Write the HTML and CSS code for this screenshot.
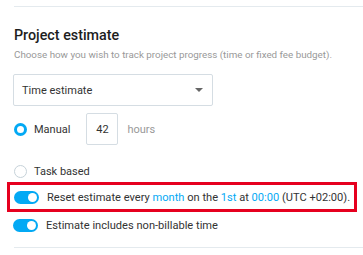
FILE: index.html
```html
<!DOCTYPE html>
<html lang="en">
<head>
    <meta charset="UTF-8">
    <meta name="viewport" content="width=device-width, initial-scale=1.0">
    <title>Project estimate</title>
    <link rel="stylesheet" href="styles.css">
</head>
<body>

    <div class="panel">
        <div class="divider divider-top"></div>

        <h2 class="title">Project estimate</h2>
        <p class="subtitle">Choose how you wish to track project progress (time or fixed fee budget).</p>

        <div class="select">
            <span>Time estimate</span>
            <span class="caret"></span>
        </div>

        <div class="radio-row manual-row">
            <span class="radio checked"></span>
            <span class="radio-label">Manual</span>
            <div class="num-input">42</div>
            <span class="unit">hours</span>
        </div>

        <div class="radio-row task-row">
            <span class="radio"></span>
            <span class="radio-label">Task based</span>
        </div>

        <div class="highlight">
            <div class="toggle-row">
                <span class="toggle on"></span>
                <span class="toggle-label">Reset estimate every <a class="link">month</a> on the <a class="link">1st</a> at <a class="link">00:00</a> (UTC +02:00).</span>
            </div>
        </div>

        <div class="toggle-row billable-row">
            <span class="toggle on"></span>
            <span class="toggle-label">Estimate includes non-billable time</span>
        </div>

        <div class="divider divider-bottom"></div>
    </div>

</body>
</html>
```

FILE: styles.css
```css
body {
    margin: 0;
    background: #ffffff;
    font-family: Roboto, "Noto Sans", sans-serif;
    color: #333333;
    overflow: hidden;
}

.panel {
    width: 363px;
    height: 255px;
}

.divider {
    height: 1px;
    background-color: #e4eaee;
    margin-left: 14px;
}

.divider-top {
    margin-top: 6px;
}

.title {
    margin: 18px 0 0 14px;
    font-size: 14.3px;
    font-weight: 500;
    line-height: 20px;
    color: #1d1d1d;
}

.subtitle {
    margin: 2px 0 0 14px;
    font-size: 9.8px;
    line-height: 16px;
    color: #999999;
    white-space: nowrap;
}

.select {
    margin: 11px 0 0 13px;
    width: 200px;
    height: 32px;
    box-sizing: border-box;
    border: 1px solid #d5dde3;
    border-radius: 2px;
    display: flex;
    align-items: center;
    justify-content: space-between;
    padding: 0 9px 0 8px;
    font-size: 11px;
}

.caret {
    width: 0;
    height: 0;
    border-left: 4px solid transparent;
    border-right: 4px solid transparent;
    border-top: 4px solid #666666;
}

.radio-row {
    display: flex;
    align-items: center;
    padding-left: 14px;
    font-size: 11px;
}

.manual-row {
    margin-top: 7px;
    height: 32px;
}

.task-row {
    margin-top: 12px;
    height: 25px;
    align-items: flex-start;
    padding-top: 8px;
    box-sizing: border-box;
}

.radio {
    width: 13px;
    height: 13px;
    box-sizing: border-box;
    border-radius: 50%;
    border: 1px solid #c6d2d9;
    background: #ffffff;
    flex-shrink: 0;
}

.radio.checked {
    border: 3.5px solid #03a9f4;
}

.radio-label {
    margin-left: 7px;
}

.num-input {
    margin-left: 16px;
    width: 32px;
    height: 32px;
    box-sizing: border-box;
    border: 1px solid #d5dde3;
    border-radius: 2px;
    display: flex;
    align-items: center;
    justify-content: center;
}

.unit {
    margin-left: 9px;
    color: #999999;
}

.highlight {
    margin: 0 6px 0 7px;
    border: 3px solid #e6001f;
    height: 24px;
    display: flex;
    align-items: center;
    padding-left: 4px;
}

.toggle-row {
    display: flex;
    align-items: center;
    font-size: 11.1px;
}

.billable-row {
    padding-left: 13px;
    height: 26px;
}

.toggle {
    position: relative;
    width: 25px;
    height: 13px;
    border-radius: 7px;
    background-color: #c6d2d9;
    flex-shrink: 0;
}

.toggle.on {
    background-color: #03a9f4;
}

/* knob */
.toggle::after {
    content: '';
    position: absolute;
    top: 2px;
    left: 2px;
    width: 9px;
    height: 9px;
    border-radius: 50%;
    background: #ffffff;
}

.toggle.on::after {
    left: 14px;
}

.toggle-label {
    margin-left: 8px;
    white-space: nowrap;
}

.link {
    color: #03a9f4;
    text-decoration: none;
}

.divider-bottom {
    margin-top: 9px;
}
```
